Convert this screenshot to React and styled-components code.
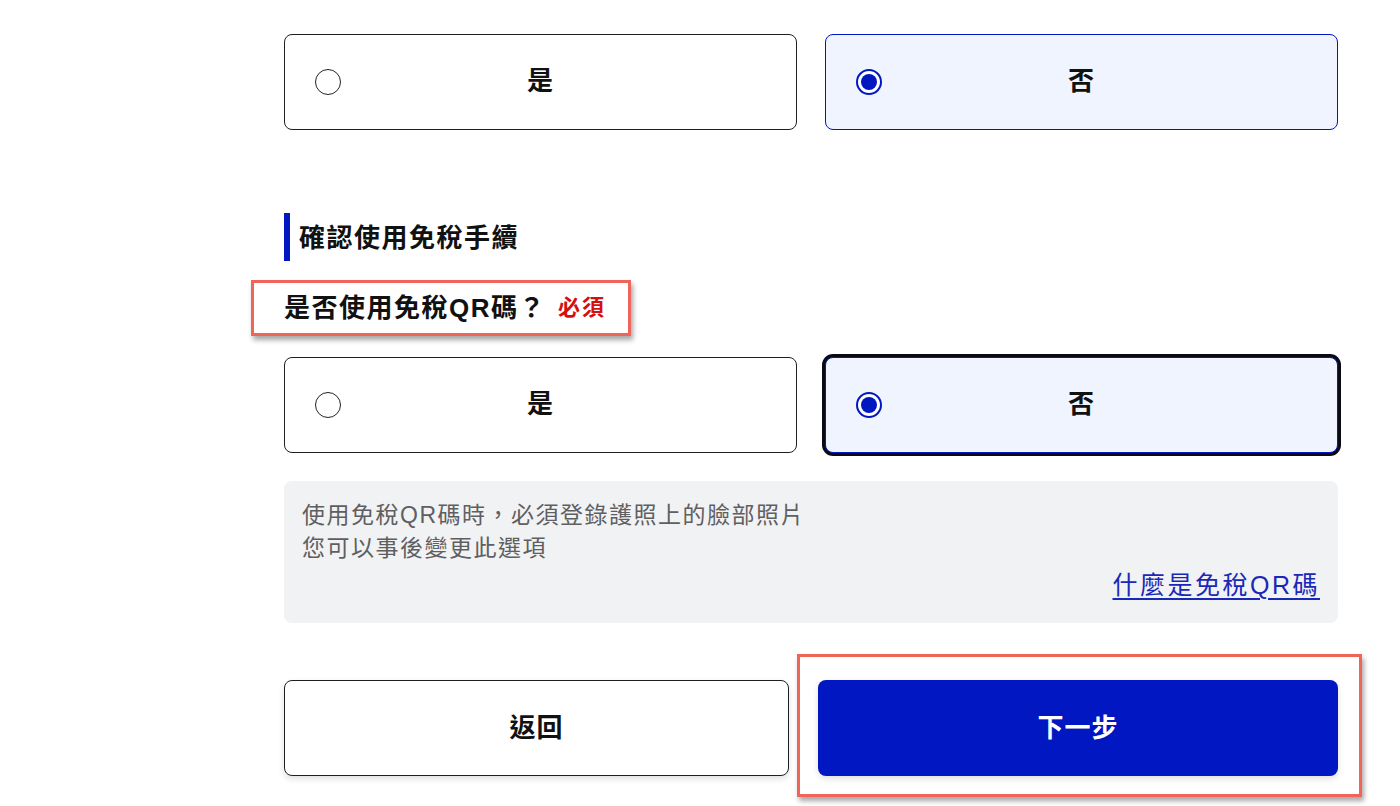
import React, { useState } from "react";
import styled, { createGlobalStyle, css } from "styled-components";

const GlobalStyle = createGlobalStyle`
  html, body {
    margin: 0;
    padding: 0;
    background: #ffffff;
  }
  body {
    font-family: "Liberation Sans", "Noto Sans CJK TC", "Noto Sans", sans-serif;
    color: #1a1a1a;
  }
`;

const BLUE = "#0017c1";
const ANNOTATE = "#f0645a";

const Page = styled.main`
  width: 1054px;
  margin-left: 284px;
  padding: 34px 0 30px;
  display: flex;
  flex-direction: column;
`;

const Choices = styled.div`
  display: grid;
  grid-template-columns: 1fr 1fr;
  gap: 28px;
  margin-top: ${(p) => p.$top || 0}px;
`;

const Choice = styled.label`
  box-sizing: border-box;
  height: 96px;
  display: grid;
  grid-template-columns: 26px 1fr 26px;
  align-items: center;
  padding: 0 30px;
  border-radius: 8px;
  cursor: pointer;
  border: 1.5px solid #1f1f1f;
  background: #ffffff;
  ${(p) =>
    p.$checked &&
    css`
      border: 1.5px solid ${BLUE};
      background: #eff4ff;
    `}
  ${(p) =>
    p.$focused &&
    css`
      box-shadow: 0 0 0 3px #0a0a14;
    `}
`;

const HiddenInput = styled.input`
  position: absolute;
  opacity: 0;
  width: 0;
  height: 0;
`;

const Dot = styled.span`
  box-sizing: border-box;
  width: 26px;
  height: 26px;
  border-radius: 50%;
  border: 1.5px solid #222;
  background: #fff;
  display: flex;
  align-items: center;
  justify-content: center;
  ${(p) =>
    p.$checked &&
    css`
      border: 2px solid ${BLUE};
      &::after {
        content: "";
        width: 16px;
        height: 16px;
        border-radius: 50%;
        background: ${BLUE};
      }
    `}
`;

const ChoiceText = styled.span`
  text-align: center;
  padding-bottom: 7px;
  font-size: 26px;
  font-weight: 700;
  letter-spacing: 1px;
  color: #111;
`;

const SectionTitle = styled.h2`
  margin: 83px 0 0;
  height: 48px;
  display: flex;
  align-items: center;
  gap: 9px;
  font-size: 26px;
  font-weight: 700;
  letter-spacing: 1.5px;
  color: #111;
  &::before {
    content: "";
    align-self: stretch;
    width: 6px;
    background: ${BLUE};
  }
`;

const TitleText = styled.span`
  padding-bottom: 4px;
`;

const Annotated = styled.div`
  position: relative;
  display: flex;
  ${(p) =>
    p.$mark &&
    css`
      &::after {
        content: "";
        position: absolute;
        top: ${p.$mark[0]}px;
        right: ${p.$mark[1]}px;
        bottom: ${p.$mark[2]}px;
        left: ${p.$mark[3]}px;
        border: 3px solid ${ANNOTATE};
        box-shadow: 2px 4px 5px rgba(0, 0, 0, 0.35);
        pointer-events: none;
      }
    `}
`;

const QuestionRow = styled(Annotated)`
  margin-top: 29px;
  align-self: flex-start;
`;

const Question = styled.div`
  display: flex;
  align-items: center;
  gap: 12px;
  line-height: 36px;
`;

const QuestionText = styled.span`
  font-size: 26px;
  font-weight: 700;
  letter-spacing: 1.5px;
  color: #111;
`;

const Required = styled.span`
  font-size: 22px;
  font-weight: 700;
  letter-spacing: 2px;
  color: #d40f0f;
`;

const Note = styled.div`
  margin-top: 28px;
  box-sizing: border-box;
  height: 142px;
  background: #f1f2f4;
  border-radius: 8px;
  padding: 18px 18px 0;
  color: #5f5f62;
  font-size: 23px;
  line-height: 33px;
  letter-spacing: 1.5px;
`;

const NoteLine = styled.p`
  margin: 0;
`;

const NoteLink = styled.a`
  display: block;
  margin-top: 4px;
  text-align: right;
  color: #1a28b8;
  text-decoration: underline;
  text-underline-offset: 4px;
  font-size: 25px;
  letter-spacing: 2.5px;
`;

const Actions = styled.div`
  margin-top: 57px;
  display: grid;
  grid-template-columns: 505px 1fr;
  gap: 29px;
`;

const ActionButton = styled.button`
  display: block;
  box-sizing: border-box;
  width: 100%;
  height: 96px;
  padding: 0 0 5px;
  border-radius: 8px;
  font-family: inherit;
  font-size: 26px;
  font-weight: 700;
  letter-spacing: 1px;
  cursor: pointer;
  box-shadow: 0 3px 6px rgba(0, 0, 0, 0.12);
  ${(p) =>
    p.$primary
      ? css`
          border: none;
          background: ${BLUE};
          color: #fff;
        `
      : css`
          border: 1.5px solid #1f1f1f;
          background: #fff;
          color: #111;
        `}
`;

function RadioPair({ name, value, onChange, top, focused }) {
  const opts = [
    { v: "yes", label: "是" },
    { v: "no", label: "否" },
  ];
  return (
    <Choices $top={top} role="radiogroup">
      {opts.map((o) => {
        const checked = value === o.v;
        return (
          <Choice key={o.v} $checked={checked} $focused={focused && checked}>
            <HiddenInput
              type="radio"
              name={name}
              checked={checked}
              onChange={() => onChange(o.v)}
            />
            <Dot $checked={checked} />
            <ChoiceText>{o.label}</ChoiceText>
            <span />
          </Choice>
        );
      })}
    </Choices>
  );
}

export default function App() {
  const [first, setFirst] = useState("no");
  const [qr, setQr] = useState("no");

  return (
    <>
      <GlobalStyle />
      <Page>
        <RadioPair name="first" value={first} onChange={setFirst} />

        <SectionTitle>
          <TitleText>確認使用免稅手續</TitleText>
        </SectionTitle>

        <QuestionRow $mark={[-10, -25, -10, -33]}>
          <Question>
            <QuestionText>是否使用免稅QR碼？</QuestionText>
            <Required>必須</Required>
          </Question>
        </QuestionRow>

        <RadioPair name="qr" value={qr} onChange={setQr} top={31} focused />

        <Note>
          <NoteLine>使用免稅QR碼時，必須登錄護照上的臉部照片</NoteLine>
          <NoteLine>您可以事後變更此選項</NoteLine>
          <NoteLink href="#qr">什麼是免稅QR碼</NoteLink>
        </Note>

        <Actions>
          <ActionButton type="button">返回</ActionButton>
          <Annotated $mark={[-26, -24, -21, -21]}>
            <ActionButton type="button" $primary>
              下一步
            </ActionButton>
          </Annotated>
        </Actions>
      </Page>
    </>
  );
}
